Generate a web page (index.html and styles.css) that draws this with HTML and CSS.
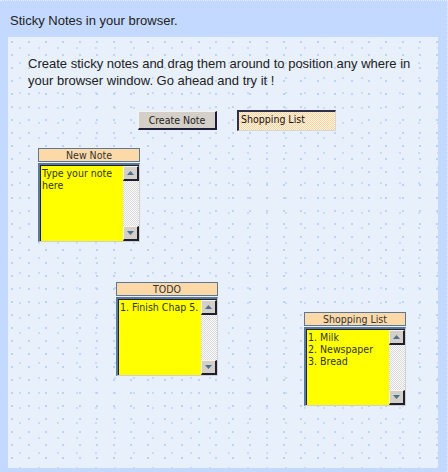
FILE: index.html
```html
<!DOCTYPE html>
<html>
<head>
<meta charset="utf-8">
<title>Sticky Notes</title>
<link rel="stylesheet" href="styles.css">
</head>
<body>
<div class="page">
  <div class="title">Sticky Notes in your browser.</div>
  <div class="panel">
    <p class="intro">Create sticky notes and drag them around to position any where in your browser window. Go ahead and try it !</p>
    <div class="controls">
      <button class="btn">Create Note</button>
      <div class="field">Shopping List</div>
    </div>

    <div class="note note-a">
      <div class="note-head">New Note</div>
      <div class="note-body">
        <div class="note-text">Type your note here</div>
        <div class="scroll">
          <div class="sbtn"><svg width="7" height="4" viewBox="0 0 7 4"><path d="M3.5 0 L7 4 L0 4 Z" fill="#4f6f8f"/></svg></div>
          <div class="track"></div>
          <div class="sbtn"><svg width="7" height="4" viewBox="0 0 7 4"><path d="M0 0 L7 0 L3.5 4 Z" fill="#4f6f8f"/></svg></div>
        </div>
      </div>
    </div>

    <div class="note note-b">
      <div class="note-head">TODO</div>
      <div class="note-body">
        <div class="note-text">1. Finish Chap 5.</div>
        <div class="scroll">
          <div class="sbtn"><svg width="7" height="4" viewBox="0 0 7 4"><path d="M3.5 0 L7 4 L0 4 Z" fill="#4f6f8f"/></svg></div>
          <div class="track"></div>
          <div class="sbtn"><svg width="7" height="4" viewBox="0 0 7 4"><path d="M0 0 L7 0 L3.5 4 Z" fill="#4f6f8f"/></svg></div>
        </div>
      </div>
    </div>

    <div class="note note-c">
      <div class="note-head">Shopping List</div>
      <div class="note-body">
        <div class="note-text">1. Milk<br>2. Newspaper<br>3. Bread</div>
        <div class="scroll">
          <div class="sbtn"><svg width="7" height="4" viewBox="0 0 7 4"><path d="M3.5 0 L7 4 L0 4 Z" fill="#4f6f8f"/></svg></div>
          <div class="track"></div>
          <div class="sbtn"><svg width="7" height="4" viewBox="0 0 7 4"><path d="M0 0 L7 0 L3.5 4 Z" fill="#4f6f8f"/></svg></div>
        </div>
      </div>
    </div>
  </div>
</div>
</body>
</html>
```

FILE: styles.css
```css
html, body {
  margin: 0;
  padding: 0;
}
body {
  background: #c3d9ff;
}
.page {
  width: 448px;
  height: 472px;
  box-sizing: border-box;
  background: #c3d9ff;
  border-top: 1px dotted #e6efff;
  border-right: 1px dotted #e6efff;
  font-family: "Liberation Sans", Arial, sans-serif;
  color: #222;
}
.title {
  font-size: 13px;
  line-height: 15px;
  padding: 12px 0 0 10px;
  height: 24px;
}
.panel {
  position: relative;
  margin-left: 8px;
  width: 430px;
  height: 431px;
  box-sizing: border-box;
  background-color: #e8f0fb;
  background-image:
    radial-gradient(circle at 1px 1px, #bcd3f6 0.7px, transparent 1px),
    radial-gradient(circle at 1px 1px, #c8dbf7 0.7px, transparent 1px);
  background-size: 17px 13px, 19px 15px;
  background-position: 3px 4px, 11px 10px;
  padding: 18px 20px 0 20px;
}
.intro {
  margin: 0;
  font-size: 13px;
  line-height: 17px;
  color: #222;
}
.controls {
  display: flex;
  align-items: flex-start;
  gap: 20px;
  margin-top: 21px;
  padding-left: 110px;
}
.btn {
  width: 79px;
  height: 19px;
  margin-top: 1px;
  padding: 0;
  background: #d4d0c8;
  border-style: solid;
  border-width: 1px 2px 2px 1px;
  border-color: #f4f3ef #1e1e3c #1e1e3c #f4f3ef;
  font-family: "DejaVu Sans Condensed", "DejaVu Sans", sans-serif;
  font-stretch: condensed;
  font-size: 10.5px;
  color: #222;
}
.field {
  width: 99px;
  height: 21px;
  box-sizing: border-box;
  border-style: solid;
  border-width: 2px 1px 1px 2px;
  border-color: #30304a #d6d6d6 #d6d6d6 #30304a;
  background-color: #fde4bf;
  background-image: conic-gradient(#f9d4a0 25%, #fff2de 0 50%, #f9d4a0 0 75%, #fff2de 0);
  background-size: 2px 2px;
  font-family: "DejaVu Sans Condensed", "DejaVu Sans", sans-serif;
  font-stretch: condensed;
  font-size: 10.5px;
  line-height: 14px;
  padding-left: 2px;
  color: #111;
}
.note {
  position: absolute;
  width: 102px;
}
.note-a { left: 30px; top: 111px; }
.note-b { left: 108px; top: 245px; }
.note-c { left: 296px; top: 275px; }
.note-head {
  height: 14px;
  box-sizing: border-box;
  border: 1px solid #5a7898;
  background: #fdd9a8;
  text-align: center;
  font-family: "DejaVu Sans Condensed", "DejaVu Sans", sans-serif;
  font-stretch: condensed;
  font-size: 10.5px;
  line-height: 12px;
  color: #333;
}
.note-body {
  margin-top: 1px;
  height: 79px;
  box-sizing: border-box;
  display: flex;
  border-style: solid;
  border-width: 2px 1px 1px 2px;
  border-color: #5a7898 #d0d0d0 #d0d0d0 #5a7898;
  box-shadow: inset 1px 1px 0 #202030;
}
.note-text {
  flex: 1;
  min-width: 0;
  background: #ffff00;
  margin: 1px 0 0 1px;
  padding: 1px 0 0 1px;
  font-family: "DejaVu Sans Condensed", "DejaVu Sans", sans-serif;
  font-stretch: condensed;
  font-size: 10.5px;
  line-height: 12px;
  color: #333;
}
.scroll {
  width: 16px;
  flex: none;
  display: flex;
  flex-direction: column;
  margin-top: 1px;
  background-color: #e6e6e6;
  background-image: conic-gradient(#d8d8d8 25%, #fbfbfb 0 50%, #d8d8d8 0 75%, #fbfbfb 0);
  background-size: 2px 2px;
}
.sbtn {
  height: 15px;
  box-sizing: border-box;
  background: #d4d0c8;
  border-style: solid;
  border-width: 1px 2px 2px 1px;
  border-color: #f4f3ef #1e1e30 #1e1e30 #f4f3ef;
  display: flex;
  align-items: center;
  justify-content: center;
}
.track {
  flex: 1;
}
```
